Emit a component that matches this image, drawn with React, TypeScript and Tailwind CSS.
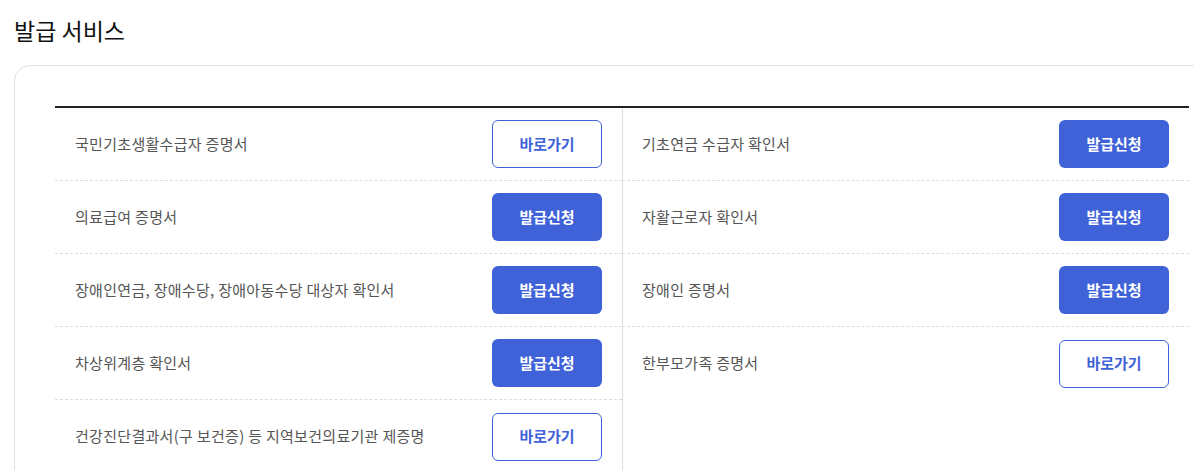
const left = [
  { name: "국민기초생활수급자 증명서", type: "link" },
  { name: "의료급여 증명서", type: "apply" },
  { name: "장애인연금, 장애수당, 장애아동수당 대상자 확인서", type: "apply" },
  { name: "차상위계층 확인서", type: "apply" },
  { name: "건강진단결과서(구 보건증) 등 지역보건의료기관 제증명", type: "link" },
];

const right = [
  { name: "기초연금 수급자 확인서", type: "apply" },
  { name: "자활근로자 확인서", type: "apply" },
  { name: "장애인 증명서", type: "apply" },
  { name: "한부모가족 증명서", type: "link" },
];

function Row({ name, type, last }: { name: string; type: string; last: boolean }) {
  return (
    <div
      className={
        "flex items-center justify-between h-[73px] pl-5 pr-5 " +
        (last ? "" : "border-b border-dashed border-[#dddddd]")
      }
    >
      <span className="text-[15px] text-[#555555] tracking-[0.3px]">{name}</span>
      {type === "apply" ? (
        <button className="w-[110px] h-[48px] rounded-[6px] bg-[#3f62d8] text-white text-[15px] font-bold">
          발급신청
        </button>
      ) : (
        <button className="w-[110px] h-[48px] rounded-[6px] border border-[#3f62d8] bg-white text-[#3f62d8] text-[15px] font-bold">
          바로가기
        </button>
      )}
    </div>
  );
}

export default function App() {
  return (
    <div
      className="w-[1194px] h-[470px] overflow-hidden bg-white"
      style={{ fontFamily: '"Noto Sans CJK KR", "Noto Sans", sans-serif' }}
    >
      <h1 className="pl-[14px] pt-[14px] text-[23px] leading-[32px] text-[#111111] font-normal">발급 서비스</h1>
      <div className="ml-[14px] mt-[19px] w-[1220px] rounded-tl-[16px] border border-[#e0e0e0] pl-10 pt-10 pb-10">
        <div className="w-[1134px] border-t-2 border-[#222222] grid grid-cols-[567px_567px]">
          <div className="border-r border-[#dddddd] -mr-px">
            {left.map((r, i) => (
              <Row key={r.name} {...r} last={i === left.length - 1} />
            ))}
          </div>
          <div>
            {right.map((r, i) => (
              <Row key={r.name} {...r} last={i === right.length - 1} />
            ))}
          </div>
        </div>
      </div>
    </div>
  );
}
